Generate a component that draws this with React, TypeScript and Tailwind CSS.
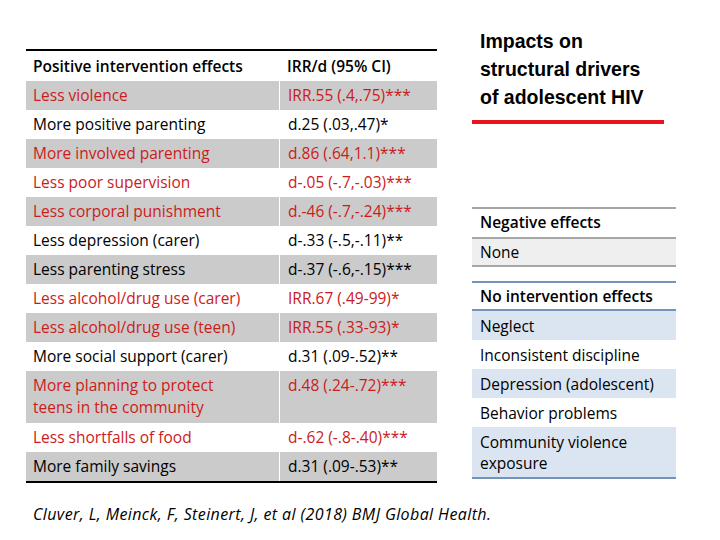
import React from 'react';

const positiveEffects = [
    { label: ["Less violence"], value: "IRR.55 (.4,.75)***", red: true },
    { label: ["More positive parenting"], value: "d.25 (.03,.47)*", red: false },
    { label: ["More involved parenting"], value: "d.86 (.64,1.1)***", red: true },
    { label: ["Less poor supervision"], value: "d-.05 (-.7,-.03)***", red: true },
    { label: ["Less corporal punishment"], value: "d.-46 (-.7,-.24)***", red: true },
    { label: ["Less depression (carer)"], value: "d-.33 (-.5,-.11)**", red: false },
    { label: ["Less parenting stress"], value: "d-.37 (-.6,-.15)***", red: false },
    { label: ["Less alcohol/drug use (carer)"], value: "IRR.67 (.49-99)*", red: true },
    { label: ["Less alcohol/drug use (teen)"], value: "IRR.55 (.33-93)*", red: true },
    { label: ["More social support (carer)"], value: "d.31 (.09-.52)**", red: false },
    { label: ["More planning to protect", "teens in the community"], value: "d.48 (.24-.72)***", red: true },
    { label: ["Less shortfalls of food"], value: "d-.62 (-.8-.40)***", red: true },
    { label: ["More family savings"], value: "d.31 (.09-.53)**", red: false },
];

const noEffects = [
    ["Neglect"],
    ["Inconsistent discipline"],
    ["Depression (adolescent)"],
    ["Behavior problems"],
    ["Community violence", "exposure"],
];

export default function App() {
    return (
        <div className="w-[720px] h-[540px] bg-white text-black font-['Open_Sans',Arial,sans-serif] overflow-hidden">
            <div className="flex pl-[26px] gap-[35px]">
                {/* LEFT TABLE */}
                <div className="w-[411px] mt-[49px]">
                    <div className="border-t-2 border-b-2 border-black">
                        <div className="flex h-[30px] items-center font-semibold text-[15.5px] pt-[1px]">
                            <div className="w-[253px] pl-[7px]">Positive intervention effects</div>
                            <div className="pl-[8px]">IRR/d (95% CI)</div>
                        </div>
                        {positiveEffects.map((row, i) => (
                            <div
                                key={i}
                                className={`flex text-[15.5px] ${i % 2 === 0 ? 'bg-[#cbcbcb]' : 'bg-white'} ${row.red ? 'text-[#cc1b1b]' : 'text-black'} ${row.label.length > 1 ? 'h-[52px]' : 'h-[29px]'}`}
                            >
                                <div className="w-[253px] pl-[7px] pt-[3px] leading-[22px]">
                                    {row.label.map(l => <div key={l}>{l}</div>)}
                                </div>
                                <div className="flex-1 pl-[8px] pt-[3px] leading-[22px] border-l border-white">{row.value}</div>
                            </div>
                        ))}
                    </div>
                </div>

                {/* RIGHT COLUMN */}
                <div className="w-[204px]">
                    <div className="pt-[27px] pl-[8px] text-[19.5px] leading-[28px] font-['Liberation_Sans',Arial,sans-serif] font-bold">
                        <div>Impacts on</div>
                        <div>structural drivers</div>
                        <div>of adolescent HIV</div>
                    </div>
                    <div className="mt-[9px] w-[192px] h-[4px] bg-[#e8141c]" />

                    <div className="mt-[83px] border-t-2 border-b-2 border-[#a6a6a6]">
                        <div className="h-[28px] flex items-center pl-[8px] font-semibold text-[15.5px]">Negative effects</div>
                        <div className="h-[28px] flex items-center pl-[8px] pt-[2px] text-[15.5px] bg-[#efefef] border-t-2 border-[#a6a6a6]">None</div>
                    </div>

                    <div className="mt-[14px] border-t-2 border-b-2 border-[#7394b8]">
                        <div className="h-[28px] flex items-center pl-[8px] pt-[2px] font-semibold text-[15.5px] border-b-2 border-[#7394b8]">No intervention effects</div>
                        {noEffects.map((lines, i) => (
                            <div
                                key={i}
                                className={`pl-[8px] pt-[5px] text-[15.5px] leading-[21px] ${i % 2 === 0 ? 'bg-[#dbe5f1]' : 'bg-white'} ${lines.length > 1 ? 'h-[50px]' : 'h-[29px]'}`}
                            >
                                {lines.map(l => <div key={l}>{l}</div>)}
                            </div>
                        ))}
                    </div>
                </div>
            </div>

            {/* CITATION */}
            <p className="mt-[19px] pl-[33px] italic text-[16px] tracking-[0.4px]">
                Cluver, L, Meinck, F, Steinert, J, et al (2018) BMJ Global Health.
            </p>
        </div>
    );
}
